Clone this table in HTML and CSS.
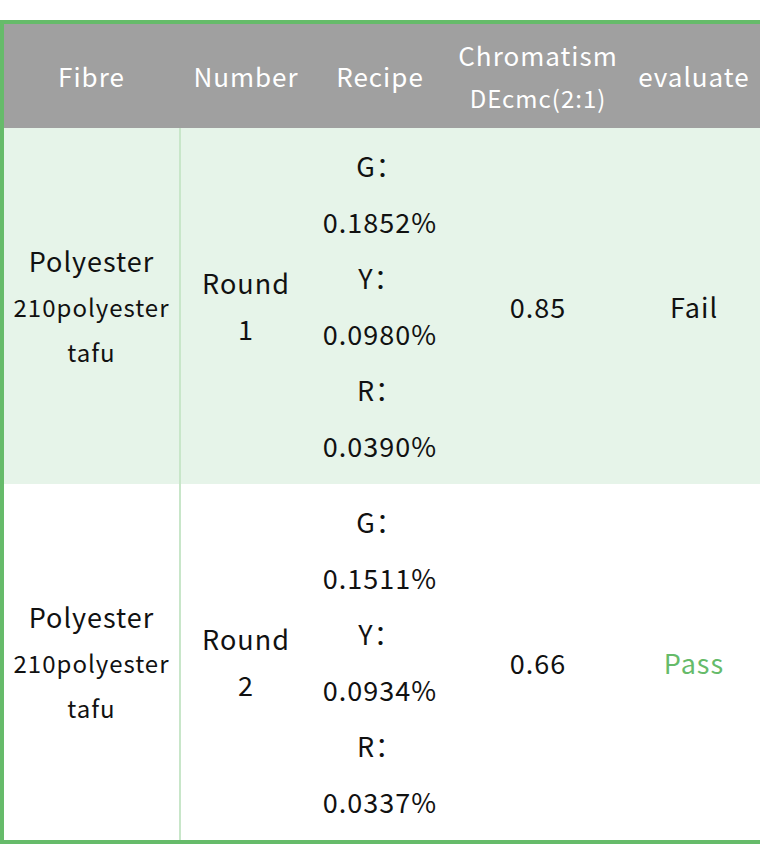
FILE: index.html
```html
<!DOCTYPE html>
<html>
<head>
<meta charset="utf-8">
<link rel="stylesheet" href="styles.css">
</head>
<body>
<div class="wrap">
<table class="grid">
  <colgroup>
    <col class="c1"><col class="c2"><col class="c3"><col class="c4"><col class="c5">
  </colgroup>
  <thead>
    <tr>
      <th class="fix">Fibre</th>
      <th>Number</th>
      <th>Recipe</th>
      <th><div>Chromatism</div><div class="sub">DEcmc(2:1)</div></th>
      <th>evaluate</th>
    </tr>
  </thead>
  <tbody>
    <tr class="odd">
      <td class="fix"><div class="big">Polyester</div><div class="small">210polyester</div><div class="small">tafu</div></td>
      <td><div class="big">Round</div><div class="big">1</div></td>
      <td class="recipe"><div>G：</div><div>0.1852%</div><div>Y：</div><div>0.0980%</div><div>R：</div><div>0.0390%</div></td>
      <td>0.85</td>
      <td>Fail</td>
    </tr>
    <tr>
      <td class="fix"><div class="big">Polyester</div><div class="small">210polyester</div><div class="small">tafu</div></td>
      <td><div class="big">Round</div><div class="big">2</div></td>
      <td class="recipe"><div>G：</div><div>0.1511%</div><div>Y：</div><div>0.0934%</div><div>R：</div><div>0.0337%</div></td>
      <td>0.66</td>
      <td class="pass">Pass</td>
    </tr>
  </tbody>
</table>
</div>
</body>
</html>
```
FILE: styles.css
```css
html, body {
  margin: 0;
  padding: 0;
  background: #ffffff;
}
.wrap {
  width: 760px;
  padding-top: 20px;
  overflow: hidden;
}
.grid {
  border-collapse: separate;
  border-spacing: 0;
  table-layout: fixed;
  width: 761px;
  border-top: 4px solid #66bb6a;
  border-left: 4px solid #66bb6a;
  border-bottom: 4px solid #66bb6a;
  font-family: "Noto Sans CJK SC", "Noto Sans", sans-serif;
  color: #111111;
}
.c1 { width: 177px; }
.c2 { width: 130px; }
.c3 { width: 138px; }
.c4 { width: 178px; }
.c5 { width: 134px; }
th {
  background: #a0a0a0;
  color: #ffffff;
  font-weight: 400;
  font-size: 26px;
  letter-spacing: 1px;
  height: 104px;
  padding: 0;
  text-align: center;
  vertical-align: middle;
  line-height: 44px;
}
th .sub {
  font-size: 24px;
  line-height: 42px;
}
td {
  height: 356px;
  padding: 0;
  text-align: center;
  vertical-align: middle;
  font-size: 27px;
  letter-spacing: 1px;
  box-sizing: border-box;
}
td.fix {
  border-right: 2px solid #c8e6c9;
}
th.fix {
  border-right: 2px solid #a0a0a0;
}
tr.odd td {
  background: #e6f4e9;
}
td .big {
  font-size: 27px;
  line-height: 46px;
}
td .small {
  font-size: 24px;
  line-height: 45px;
}
td.recipe {
  font-size: 27px;
  line-height: 56px;
}
td.pass {
  color: #66bb6a;
}
```
